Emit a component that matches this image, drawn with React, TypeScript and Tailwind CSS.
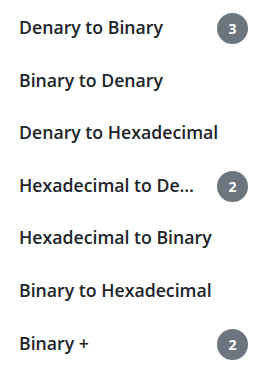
import React from "react";

const items: { label: string; count?: number }[] = [
  { label: "Denary to Binary", count: 3 },
  { label: "Binary to Denary" },
  { label: "Denary to Hexadecimal" },
  { label: "Hexadecimal to Denary", count: 2 },
  { label: "Hexadecimal to Binary" },
  { label: "Binary to Hexadecimal" },
  { label: "Binary +", count: 2 },
];

export default function App() {
  return (
    <div
      className="w-[264px] h-[371px] bg-white pt-[1px] overflow-hidden"
      style={{ fontFamily: '"Open Sans", "Noto Sans", sans-serif' }}
    >
      {items.map((it) => (
        <div key={it.label} className="h-[52.6px] flex items-center pl-[19px] pr-[16px]">
          <div className="flex-1 min-w-0 truncate text-[17.7px] font-semibold text-[#212529] pr-[18px]">
            {it.label}
          </div>
          {it.count !== undefined && (
            <div className="w-[31px] h-[31px] rounded-full bg-[#6c757d] text-white text-[14px] font-bold flex items-center justify-center shrink-0 mt-[3px]">
              {it.count}
            </div>
          )}
        </div>
      ))}
    </div>
  );
}
